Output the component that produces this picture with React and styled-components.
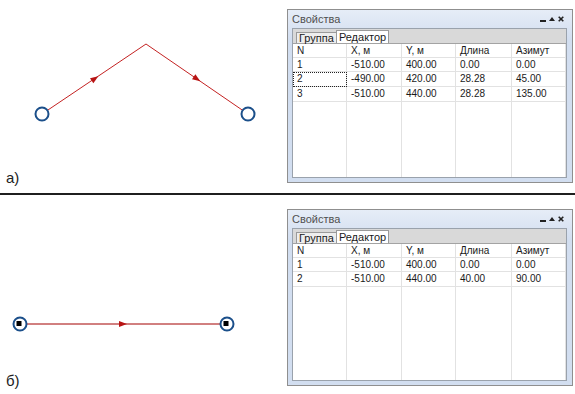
import React from "react";
import styled, { createGlobalStyle } from "styled-components";

const Global = createGlobalStyle`
  html, body { margin: 0; padding: 0; background: #fff; }
  body { font-family: "Liberation Sans", Arial, sans-serif; }
`;

const Page = styled.div`
  width: 575px;
  height: 394px;
  display: flex;
  flex-direction: column;
  background: #fff;
  overflow: hidden;
`;

const Section = styled.div`
  height: ${(p) => p.$h}px;
  display: flex;
  flex-shrink: 0;
`;

const Separator = styled.div`
  height: 2px;
  flex-shrink: 0;
  background: #1f1f1f;
`;

const Canvas = styled.div`
  width: 287px;
  flex-shrink: 0;
  display: flex;
  flex-direction: column;
`;

const Caption = styled.div`
  margin-top: auto;
  margin-bottom: ${(p) => p.$bottom}px;
  padding-left: 6px;
  font-size: 15px;
  line-height: 16px;
  color: #222;
`;

const Panel = styled.div`
  margin-top: ${(p) => p.$top}px;
  width: 286px;
  height: ${(p) => p.$h}px;
  box-sizing: border-box;
  border: 1px solid #8f8f8f;
  background: linear-gradient(#e6edf7, #d2def0 30px);
  padding: 0 5px 4px 4px;
  display: flex;
  flex-direction: column;
`;

const TitleBar = styled.div`
  height: 18px;
  flex-shrink: 0;
  display: flex;
  align-items: center;
  justify-content: space-between;
  font-size: 11px;
  color: #505050;
`;

const Controls = styled.div`
  display: flex;
  align-items: center;
  gap: 3px;
  padding-right: 3px;
`;

const Body = styled.div`
  flex: 1;
  border: 1px solid #9aa2ac;
  background: #fff;
  display: flex;
  flex-direction: column;
  min-height: 0;
`;

const TabStrip = styled.div`
  height: 15px;
  flex-shrink: 0;
  box-sizing: border-box;
  background: #d9d9d9;
  border-bottom: 1px solid #a3a3a3;
  display: flex;
  align-items: flex-end;
  padding-left: 3px;
`;

const Tab = styled.div`
  height: ${(p) => (p.$active ? 13 : 11)}px;
  box-sizing: border-box;
  border: 1px solid #9a9a9a;
  border-bottom: none;
  background: ${(p) => (p.$active ? "#fff" : "#eeeeee")};
  padding: 0 2px;
  font-size: 11px;
  line-height: ${(p) => (p.$active ? 13 : 11)}px;
  color: #1a1a1a;
  margin-left: ${(p) => (p.$active ? -1 : 0)}px;
`;

const Grid = styled.div`
  flex: 1;
  display: grid;
  grid-template-columns: 54px 55px 54px 56px 1fr;
  grid-template-rows: ${(p) => p.$rows} 1fr;
`;

const Cell = styled.div`
  box-sizing: border-box;
  border-right: 1px solid #e2e2e2;
  border-bottom: ${(p) => (p.$filler ? "none" : "1px solid #e2e2e2")};
  padding: 1px 0 0 4px;
  font-size: 10px;
  line-height: 12px;
  color: #1a1a1a;
  white-space: nowrap;
  outline: ${(p) => (p.$focus ? "1px dotted #222" : "none")};
  outline-offset: -1px;
`;

const HEAD = ["N", "X, м", "Y, м", "Длина", "Азимут"];

const dataA = [
  ["1", "-510.00", "400.00", "0.00", "0.00"],
  ["2", "-490.00", "420.00", "28.28", "45.00"],
  ["3", "-510.00", "440.00", "28.28", "135.00"],
];

const dataB = [
  ["1", "-510.00", "400.00", "0.00", "0.00"],
  ["2", "-510.00", "440.00", "40.00", "90.00"],
];

const WindowControls = () => (
  <Controls>
    <svg width="6" height="6" viewBox="0 0 6 6">
      <rect x="0" y="4" width="6" height="2" fill="#222" />
    </svg>
    <svg width="6" height="6" viewBox="0 0 6 6">
      <path d="M0,5 L3,1 L6,5 Z" fill="#222" />
    </svg>
    <svg width="6" height="6" viewBox="0 0 6 6">
      <path d="M0.7,0.7 L5.3,5.3 M5.3,0.7 L0.7,5.3" stroke="#222" strokeWidth="1.6" />
    </svg>
  </Controls>
);

const PropertiesPanel = ({ top, height, rows, focusRow, rowHeights }) => (
  <Panel $top={top} $h={height}>
    <TitleBar>
      <span>Свойства</span>
      <WindowControls />
    </TitleBar>
    <Body>
      <TabStrip>
        <Tab>Группа</Tab>
        <Tab $active>Редактор</Tab>
      </TabStrip>
      <Grid $rows={rowHeights}>
        {HEAD.map((h) => (
          <Cell key={h}>{h}</Cell>
        ))}
        {rows.map((r, i) =>
          r.map((v, j) => (
            <Cell key={i + "-" + j} $focus={focusRow === i && j === 0}>
              {v}
            </Cell>
          ))
        )}
        {HEAD.map((h) => (
          <Cell key={"f" + h} $filler />
        ))}
      </Grid>
    </Body>
  </Panel>
);

const Arrow = ({ x, y, angle, color }) => (
  <path
    d="M4,0 L-4,-3 L-4,3 Z"
    fill={color}
    transform={`translate(${x} ${y}) rotate(${angle})`}
  />
);

const Node = ({ x, y, marked }) => (
  <g>
    <circle cx={x} cy={y} r="6.5" fill="#fff" stroke="#1b4f8a" strokeWidth="2" />
    {marked && <rect x={x - 3.5} y={y - 3} width="5" height="5" fill="#000" />}
  </g>
);

const DrawingA = () => (
  <svg width="287" height="160" viewBox="0 0 287 160">
    <polyline points="42,114 146,44 248,114" fill="none" stroke="#c42222" strokeWidth="1" />
    <Arrow x={95} y={78.5} angle={-34} color="#b81414" />
    <Arrow x={197} y={79} angle={34.5} color="#b81414" />
    <Node x={42} y={114} />
    <Node x={248} y={114} />
  </svg>
);

const DrawingB = () => (
  <svg width="287" height="160" viewBox="0 0 287 160">
    <line x1="20" y1="129" x2="227" y2="129" stroke="#a30000" strokeWidth="1" />
    <Arrow x={123} y={129} angle={0} color="#b81414" />
    <Node x={20} y={129} marked />
    <Node x={227} y={129} marked />
  </svg>
);

export default function App() {
  return (
    <>
      <Global />
      <Page>
        <Section $h={193}>
          <Canvas>
            <DrawingA />
            <Caption $bottom={7}>а)</Caption>
          </Canvas>
          <PropertiesPanel
            top={9}
            height={174}
            rows={dataA}
            focusRow={1}
            rowHeights="14px 14px 15px 15px"
          />
        </Section>
        <Separator />
        <Section $h={199}>
          <Canvas>
            <DrawingB />
            <Caption $bottom={5}>б)</Caption>
          </Canvas>
          <PropertiesPanel
            top={14}
            height={177}
            rows={dataB}
            focusRow={-1}
            rowHeights="14px 14px 15px"
          />
        </Section>
      </Page>
    </>
  );
}
